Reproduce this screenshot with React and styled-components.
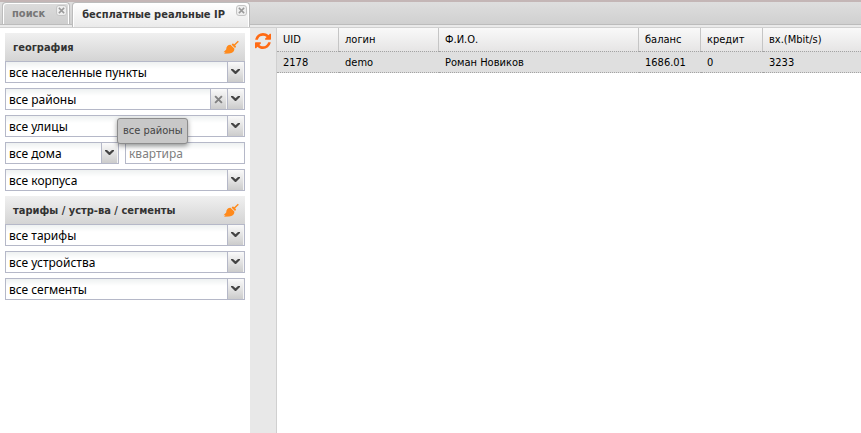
import React, { useState } from 'react';
import styled, { createGlobalStyle, css } from 'styled-components';

const GlobalStyle = createGlobalStyle`
    * {
        box-sizing: border-box;
    }

    body {
        margin: 0;
        background: #ffffff;
        color: #000000;
        font-family: Tahoma, 'DejaVu Sans Condensed', 'Noto Sans', sans-serif;
        font-size: 11px;
    }

    button, input, select {
        font-family: inherit;
    }
`;

const Page = styled.div`
    display: flex;
    flex-direction: column;
    min-height: 100vh;
`;

const TabBar = styled.nav`
    display: flex;
    align-items: flex-end;
    gap: 2px;
    height: 28px;
    padding: 0 2px;
    border-top: 2px solid #c4b6b6;
    border-bottom: 1px solid #d0d0d0;
    background: linear-gradient(#dedede, #d0d0d0 22px, #bcbcbc 22px, #bcbcbc 23px, #eaeaea 23px);
`;

const Tab = styled.div`
    display: flex;
    height: 25px;
    padding: 0 2px 0 9px;
    border: 1px solid #bcbcbc;
    border-bottom: 0;
    border-radius: 4px 4px 0 0;
    box-shadow: inset 1px 1px 0 #ffffff, inset -1px 0 0 #ffffff;
    background: linear-gradient(#dcdcdc, #cecece);

    ${({ $active }) => ($active ? css`
        background: linear-gradient(#ffffff, #eaeaea);
    ` : css`
        height: 22px;
        margin-bottom: 3px;
    `)}
`;

const TabTitle = styled.button`
    padding: 0;
    border: 0;
    background: none;
    font-size: 11px;
    font-weight: bold;
    line-height: 22px;
    color: ${({ $active }) => ($active ? '#333333' : '#777777')};
`;

const TabClose = styled.button`
    display: flex;
    align-items: center;
    justify-content: center;
    width: 11px;
    height: 11px;
    margin: 2px 0 0 11px;
    padding: 0;
    border: 1px solid #c4c4c4;
    border-radius: 3px;
    background: #eeeeee;
`;

const Main = styled.div`
    display: flex;
    flex: 1;
`;

const Sidebar = styled.form`
    display: flex;
    flex: none;
    flex-direction: column;
    gap: 5px;
    width: 250px;
    padding: 5px;
`;

const Group = styled.section`
    display: flex;
    flex-direction: column;
    gap: 5px;
`;

const GroupHeader = styled.header`
    display: flex;
    align-items: center;
    justify-content: space-between;
    height: 28px;
    margin-bottom: -5px;
    padding: 0 6px 0 8px;
    background: linear-gradient(#f0f0f0, #d4d4d4);
`;

const GroupTitle = styled.h2`
    margin: 0;
    font-size: 11px;
    color: #333333;
`;

const IconButton = styled.button`
    display: flex;
    padding: 0;
    border: 0;
    background: none;
`;

const Row = styled.div`
    display: grid;
    grid-template-columns: 19fr 20fr;
    gap: 6px;
`;

const Field = styled.div`
    display: flex;
    min-width: 0;
    height: 22px;
    border: 1px solid #b5b8c8;
    background: linear-gradient(#eef1f1, #ffffff 7px);
`;

const Select = styled.select`
    flex: 1;
    min-width: 0;
    padding: 0 3px;
    border: 0;
    outline: 0;
    appearance: none;
    background: none;
    font-family: Tahoma, 'Noto Sans', sans-serif;
    font-size: 12px;
    color: #000000;
`;

const Input = styled.input`
    width: 100%;
    padding: 0 3px;
    border: 0;
    outline: 0;
    background: none;
    font-family: Tahoma, 'Noto Sans', sans-serif;
    font-size: 12px;

    &::placeholder {
        color: #808080;
    }
`;

const Trigger = styled.button`
    display: flex;
    flex: none;
    align-items: center;
    justify-content: center;
    width: 17px;
    padding: 0;
    border: 0;
    border-left: 1px solid #b5b8c8;
    border-right: 1px solid #f4f4f4;
    background: linear-gradient(#fafafa, #cccccc);
`;

const Tools = styled.div`
    flex: none;
    width: 27px;
    padding: 5px;
    border-right: 1px solid #d0d0d0;
    background: #e8e8e8;
`;

const Grid = styled.div`
    flex: 1;
    min-width: 0;
    overflow: hidden;
`;

const Table = styled.table`
    width: 100%;
    table-layout: fixed;
    border-collapse: separate;
    border-spacing: 0;
`;

const HeadCell = styled.th`
    width: ${({ $width }) => $width || 'auto'};
    height: 23px;
    padding: 0 6px;
    border-right: 1px solid #c5c5c5;
    background: linear-gradient(#f9f9f9, #e6e5e5);
    font-weight: normal;
    text-align: left;
    white-space: nowrap;

    &:last-child {
        border-right: 0;
    }
`;

const Cell = styled.td`
    height: 22px;
    padding: 0 6px;
    border-top: 1px dotted #a3a3a3;
    border-bottom: 1px dotted #a3a3a3;
    background: #dfdfdf;
    white-space: nowrap;
`;

const Tooltip = styled.div`
    position: absolute;
    top: 118px;
    left: 117px;
    padding: 5px 4px 5px 5px;
    border: 1px solid #8c8c8c;
    border-radius: 3px;
    background: #c8c8c8;
    box-shadow: 0 2px 5px rgba(0, 0, 0, 0.4);
    font-size: 11px;
    line-height: 14px;
    color: #444444;
`;

const CrossIcon = ({ size, color }) => (
    <svg width={size} height={size} viewBox="0 0 8 8">
        <path d="M1 1L7 7M7 1L1 7" stroke={color} strokeWidth="1.700" />
    </svg>
);

const ArrowIcon = () => (
    <svg width="9" height="6" viewBox="0 0 9 6">
        <path d="M0 0H2L4.500 2.200L7 0H9V1L5 5H4L0 1Z" fill="#444444" />
    </svg>
);

const BroomIcon = () => (
    <svg width="16" height="15" viewBox="0 0 16 15">
        <path d="M15.300 1.200L11 5.500" stroke="#ff8a1c" strokeWidth="1.400" />
        <path d="M9.200 3.800L10.200 3.500L13 6.300L12.700 7.500L11.700 7.800L8.700 4.800Z" fill="#ff8a1c" />
        <path d="M7.500 4.800L11.300 8.600C11.600 11.500 9.500 13.200 6 13.500L1 13.800L2.500 12.200L0.500 12.300L3.200 9.500C3.200 6.800 4.800 4.800 7.500 4.800Z" fill="#ff8a1c" />
    </svg>
);

const RefreshIcon = () => (
    <svg width="16" height="16" viewBox="0 0 1536 1536">
        <path
            fill="#ff6a13"
            d="M1511 928q0 5-1 7-64 268-268 434.500t-478 166.500q-146 0-282.500-55t-243.500-157l-129 129q-19 19-45 19t-45-19-19-45v-448q0-26 19-45t45-19h448q26 0 45 19t19 45-19 45l-137 137q71 66 161 102t187 36q134 0 250-65t186-179q11-17 53-117 8-23 30-23h192q13 0 22.500 9.500t9.500 22.500zM1536 128v448q0 26-19 45t-45 19h-448q-26 0-45-19t-19-45 19-45l138-138q-148-137-349-137-134 0-250 65t-186 179q-11 17-53 117-8 23-30 23h-199q-13 0-22.500-9.500t-9.500-22.500v-7q65-268 270-434.500t480-166.500q146 0 284 55.500t245 156.500l130-129q19-19 45-19t45 19 19 45z"
        />
    </svg>
);

const Combo = ({ name, value, onClear }) => (
    <Field>
        <Select name={name} aria-label={value}>
            <option>{value}</option>
        </Select>
        {onClear && (
            <Trigger type="button" aria-label="очистить" onClick={onClear}>
                <CrossIcon size={9} color="#808080" />
            </Trigger>
        )}
        <Trigger type="button" aria-label="открыть">
            <ArrowIcon />
        </Trigger>
    </Field>
);

const FilterGroup = ({ title, children }) => (
    <Group>
        <GroupHeader>
            <GroupTitle>{title}</GroupTitle>
            <IconButton type="reset" aria-label="сбросить">
                <BroomIcon />
            </IconButton>
        </GroupHeader>
        {children}
    </Group>
);

const tabs = ['поиск', 'бесплатные реальные IP'];

const columns = [
    { key: 'uid', title: 'UID', width: '62px' },
    { key: 'login', title: 'логин', width: '100px' },
    { key: 'name', title: 'Ф.И.О.', width: '200px' },
    { key: 'balance', title: 'баланс', width: '62px' },
    { key: 'credit', title: 'кредит', width: '62px' },
    { key: 'rate', title: 'вх.(Mbit/s)' },
];

const users = [
    { uid: '2178', login: 'demo', name: 'Роман Новиков', balance: '1686.01', credit: '0', rate: '3233' },
];

const App = () => {
    const [active, setActive] = useState(1);
    const [tip, setTip] = useState(true);

    return (
        <Page>
            <GlobalStyle />
            <TabBar>
                {tabs.map((title, i) => (
                    <Tab key={title} $active={i === active}>
                        <TabTitle $active={i === active} onClick={() => setActive(i)}>{title}</TabTitle>
                        <TabClose aria-label="закрыть">
                            <CrossIcon size={7} color="#999999" />
                        </TabClose>
                    </Tab>
                ))}
            </TabBar>
            <Main>
                <Sidebar>
                    <FilterGroup title="география">
                        <Combo name="city" value="все населенные пункты" />
                        <Combo name="district" value="все районы" onClear={() => setTip(false)} />
                        <Combo name="street" value="все улицы" />
                        <Row>
                            <Combo name="house" value="все дома" />
                            <Field>
                                <Input name="flat" placeholder="квартира" aria-label="квартира" />
                            </Field>
                        </Row>
                        <Combo name="building" value="все корпуса" />
                    </FilterGroup>
                    <FilterGroup title="тарифы / устр-ва / сегменты">
                        <Combo name="tariff" value="все тарифы" />
                        <Combo name="device" value="все устройства" />
                        <Combo name="segment" value="все сегменты" />
                    </FilterGroup>
                </Sidebar>
                <Tools>
                    <IconButton aria-label="обновить">
                        <RefreshIcon />
                    </IconButton>
                </Tools>
                <Grid>
                    <Table>
                        <thead>
                            <tr>
                                {columns.map(({ key, title, width }) => (
                                    <HeadCell key={key} $width={width}>{title}</HeadCell>
                                ))}
                            </tr>
                        </thead>
                        <tbody>
                            {users.map((user) => (
                                <tr key={user.uid}>
                                    {columns.map(({ key }) => (
                                        <Cell key={key}>{user[key]}</Cell>
                                    ))}
                                </tr>
                            ))}
                        </tbody>
                    </Table>
                </Grid>
            </Main>
            {tip && <Tooltip role="tooltip">все районы</Tooltip>}
        </Page>
    );
};

export default App;
